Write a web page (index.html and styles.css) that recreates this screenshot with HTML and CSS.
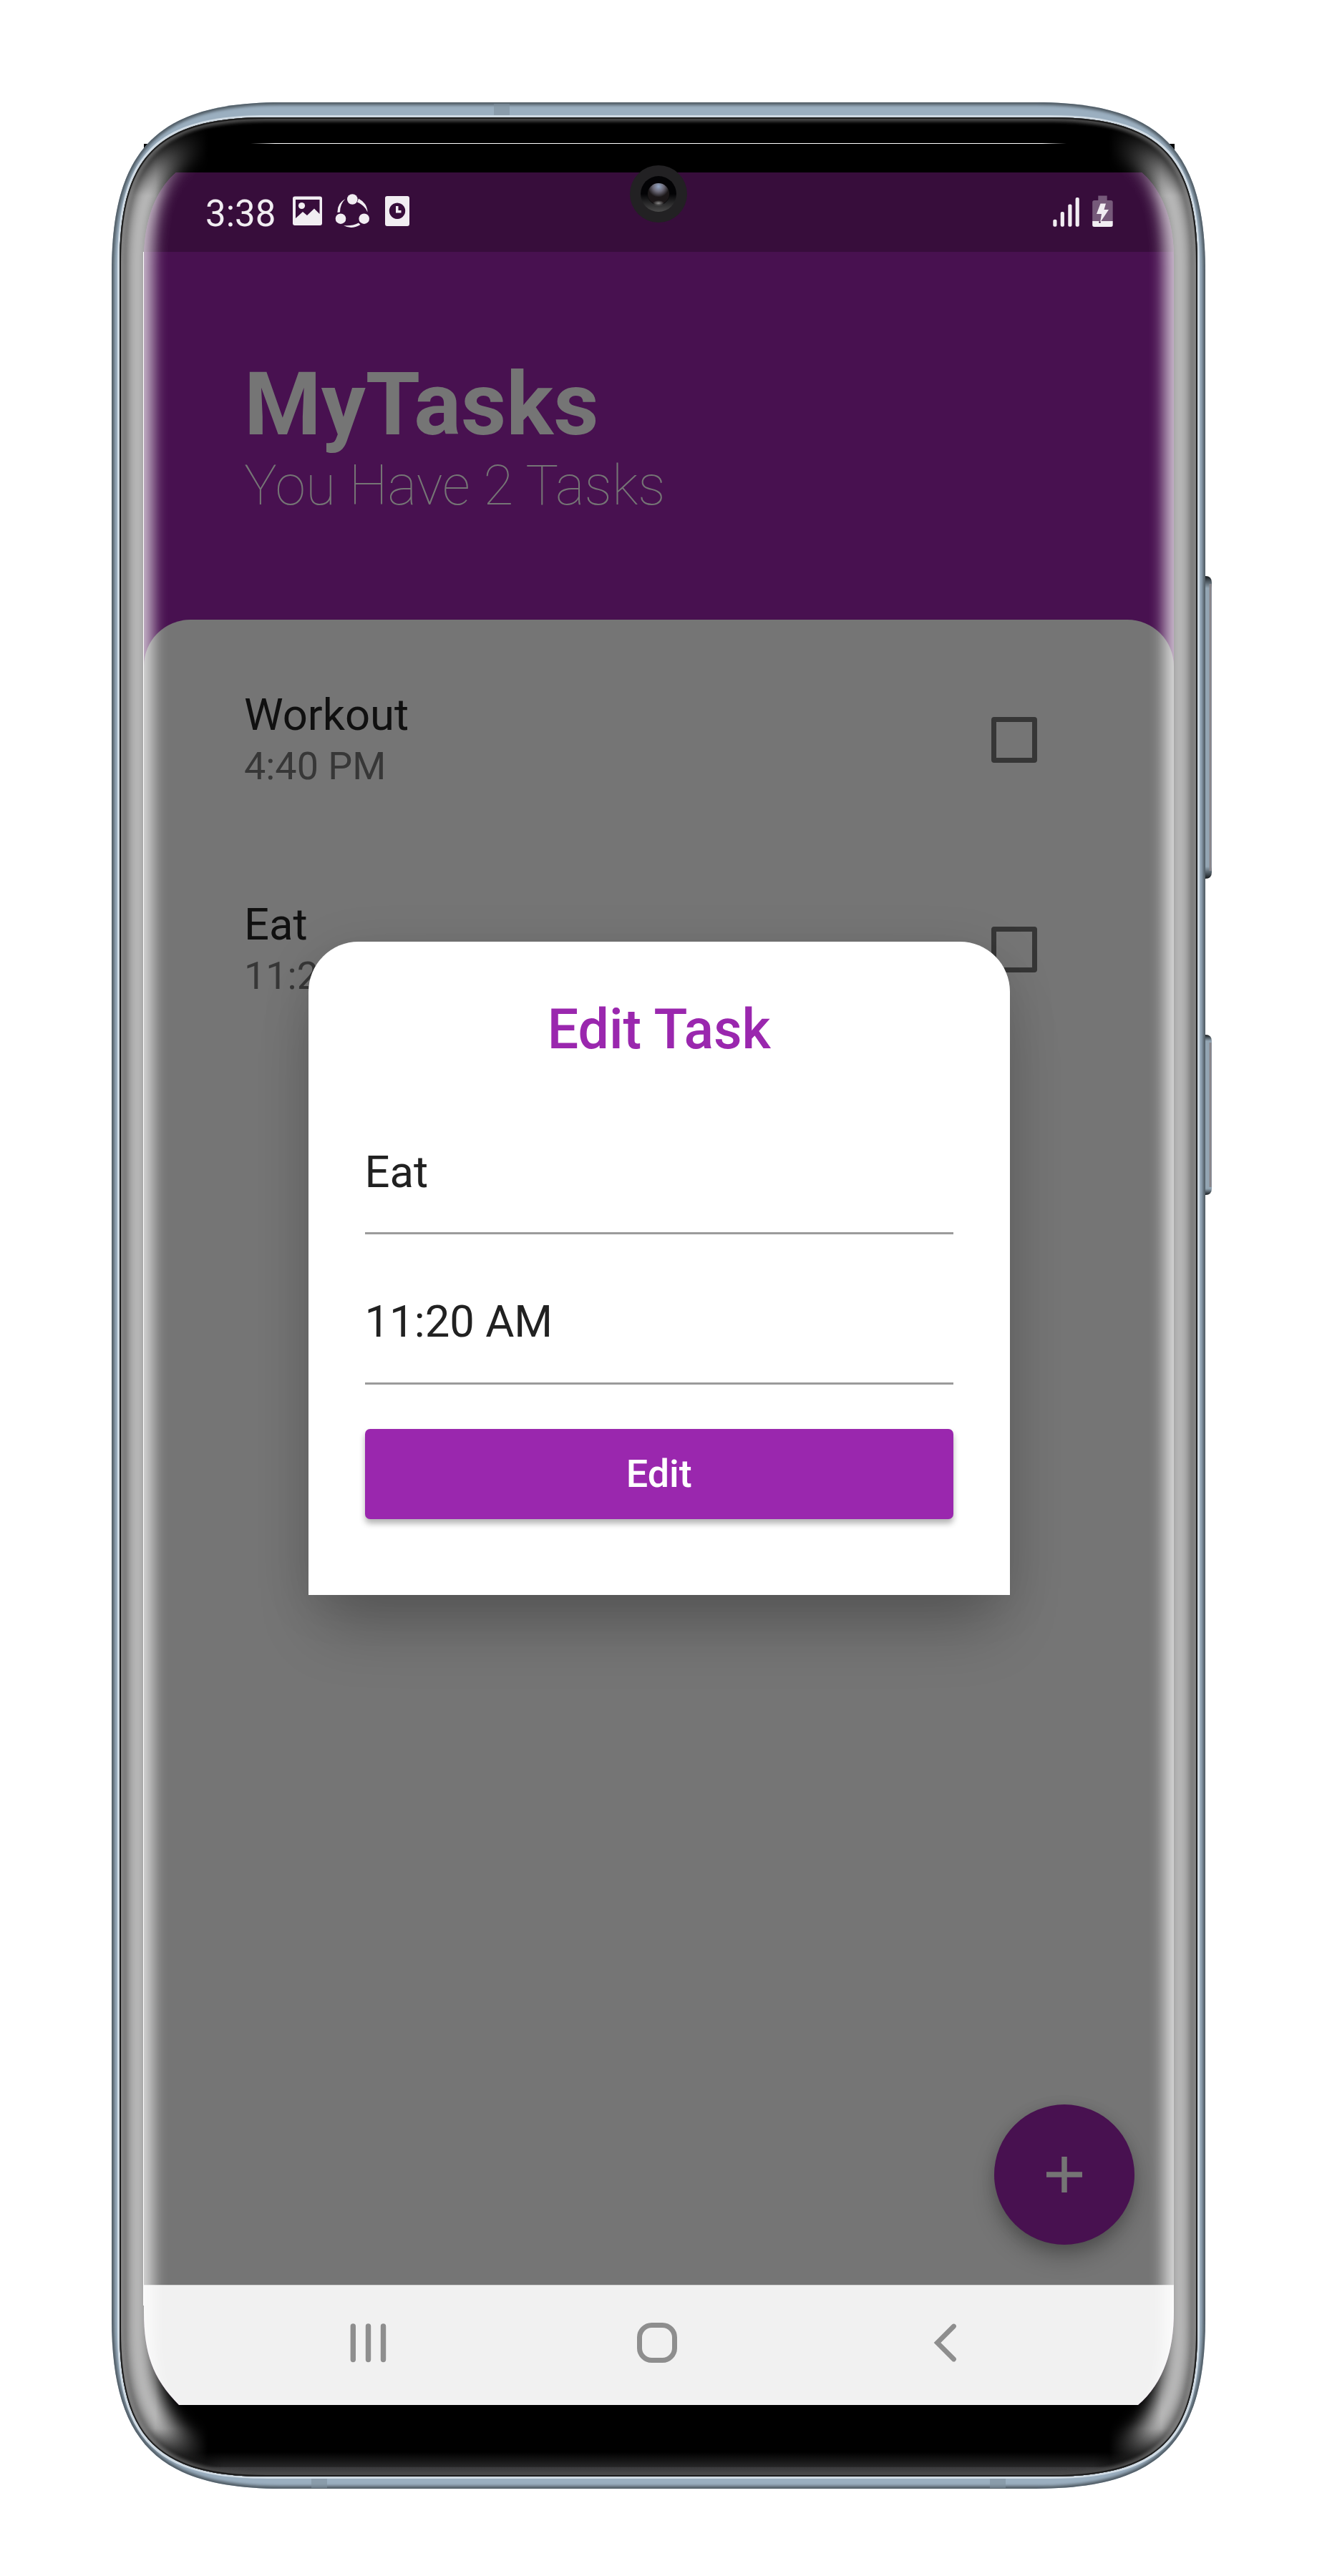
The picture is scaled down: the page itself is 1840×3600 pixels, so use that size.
FILE: index.html
```html
<!DOCTYPE html>
<html lang="en">
<head>
<meta charset="utf-8">
<title>MyTasks</title>
<link rel="stylesheet" href="styles.css">
</head>
<body>
<div class="stage">
  <svg class="frame" viewBox="0 0 1840 3600" aria-hidden="true">
    <defs>
      <path id="outer" d="M393 143H1447C1619 143 1684 208 1684 380V3241C1684 3413 1619 3478 1447 3478H393C221 3478 156 3413 156 3241V380C156 208 221 143 393 143Z"/>
      <path id="inner" d="M372 164H1468C1619 164 1673 218 1673 369V3256C1673 3407 1619 3461 1468 3461H372C221 3461 167 3407 167 3256V369C167 218 221 164 372 164Z"/>
      <path id="rim" d="M373 161H1467C1622 161 1676 215 1676 370V3257C1676 3410 1622 3464 1467 3464H373C218 3464 164 3410 164 3257V370C164 215 218 161 373 161Z"/>
      <clipPath id="clipOuter"><use href="#outer"/></clipPath>
      <clipPath id="clipInner"><use href="#inner"/></clipPath>
      <filter id="soft" filterUnits="userSpaceOnUse" x="100" y="100" width="1640" height="3400"><feGaussianBlur stdDeviation="2"/></filter>
      <linearGradient id="key" x1="0" y1="0" x2="0" y2="1">
        <stop offset="0" stop-color="#15191c"/><stop offset=".04" stop-color="#93a5b3"/>
        <stop offset=".96" stop-color="#93a5b3"/><stop offset="1" stop-color="#15191c"/>
      </linearGradient>
      <linearGradient id="chin" x1="0" y1="0" x2="0" y2="1">
        <stop offset="0" stop-color="#000"/><stop offset=".6" stop-color="#262627"/><stop offset=".62" stop-color="#3a3a3c"/><stop offset="1" stop-color="#464648"/>
      </linearGradient>
      <linearGradient id="chinFade" gradientUnits="userSpaceOnUse" x1="230" y1="0" x2="1610" y2="0"><stop offset="0" stop-color="#000"/><stop offset=".06" stop-color="#fff"/><stop offset=".94" stop-color="#fff"/><stop offset="1" stop-color="#000"/></linearGradient>
      <mask id="chinMask" maskUnits="userSpaceOnUse" x="0" y="3400" width="1840" height="100"><rect y="3400" width="1840" height="100" fill="url(#chinFade)"/></mask>
    </defs>
    <rect x="201" y="201" width="1440" height="20"/>
    <path d="M1680 805H1684Q1693 805 1693 814V1219Q1693 1228 1684 1228H1680Z" fill="url(#key)"/>
    <path d="M1680 1446H1684Q1693 1446 1693 1455V1661Q1693 1670 1684 1670H1680Z" fill="url(#key)"/>
    <path d="M1691 816V1217M1691 1457V1659" stroke="#8a868b" stroke-width="3"/>
    <use href="#outer" fill="#9bafc0"/>
    <g clip-path="url(#clipOuter)">
      <use href="#outer" fill="none" stroke="#4c565e" stroke-width="7" filter="url(#soft)"/>
      <path d="M690 145h22v16h-22zM435 3461h22v16h-22zM1383 3461h22v16h-22z" fill="#7f909d" opacity=".6"/>
    </g>
    <use href="#rim" fill="#cfdae3"/>
    <use href="#inner" fill="#000"/>
    <g clip-path="url(#clipInner)">
      <path d="M230 3427H1610V3461H230Z" fill="url(#chin)" mask="url(#chinMask)"/>
      <use href="#inner" fill="none" stroke="#484848" stroke-width="12" filter="url(#soft)"/>
      <use href="#inner" fill="none" stroke="#1c1c1c" stroke-width="4"/>
    </g>
  </svg>

  <main class="screen">
    <div class="status">
      <span class="clock">3:38</span>
      <svg class="notices" viewBox="409 270 166 50" aria-hidden="true">
        <g fill="#f1edf2">
          <path fill-rule="evenodd" d="M412 274.500H447Q450 274.500 450 277.500V312Q450 315 447 315H412Q409 315 409 312V277.500Q409 274.500 412 274.500ZM413 279V305L423 296L429 301L439 291.500L446.500 299V279Z"/>
          <circle cx="421.500" cy="287.500" r="4.600"/>
          <circle cx="492.300" cy="278.500" r="7.300"/><circle cx="476" cy="305.700" r="7.300"/><circle cx="508.700" cy="305.700" r="7.300"/>
          <path d="M482.500 278Q471 284 471.500 297L475 296.500Q475 285 482.500 278ZM501 277.500Q513 284 513.500 296.500Q509 286.500 499 282.500ZM480 315Q491 321.500 503.500 314L501 311.500Q491 316.500 480 315Z"/>
          <path fill-rule="evenodd" d="M541 274H569Q572 274 572 277V313Q572 316 569 316H541Q538 316 538 313V277Q538 274 541 274ZM555 283.500A11.200 11.200 0 1 0 555.010 283.500Z"/>
          <path d="M553 288H556.500V294H560.500V297.500H553Z"/>
        </g>
      </svg>
      <svg class="signals" viewBox="1471 272 84 46" aria-hidden="true">
        <g fill="#f1edf2">
          <rect x="1471.300" y="306.700" width="5.200" height="10" rx="2"/><rect x="1481.700" y="296" width="5.200" height="20.700" rx="2"/>
          <rect x="1492.300" y="285.500" width="5.200" height="31.200" rx="2"/><rect x="1502.600" y="276" width="5.200" height="40.700" rx="2"/>
        </g>
        <path d="M1534.300 273.500H1546.700V280H1552Q1554.700 280 1554.700 282.500V309H1526.200V282.500Q1526.200 280 1529 280H1534.300Z" fill="#765a7a"/>
        <path d="M1526.200 309H1554.700V314.500Q1554.700 317 1552 317H1529Q1526.200 317 1526.200 314.500Z" fill="#f1edf2"/>
        <path d="M1537.500 284.500H1545L1542.500 293H1549L1537 311L1539 299H1532Z" fill="#f1edf2"/>
        <circle cx="1536.500" cy="310.500" r="1.200" fill="#370d3b"/>
      </svg>
    </div>
    <header class="header">
      <h1 class="title">MyTasks</h1>
      <p class="subtitle">You Have 2 Tasks</p>
    </header>
    <section class="sheet">
      <ul class="tasks">
        <li class="task">
          <div><div class="name">Workout</div><div class="time">4:40 PM</div></div>
          <span class="box"></span>
        </li>
        <li class="task">
          <div><div class="name">Eat</div><div class="time">11:20 AM</div></div>
          <span class="box"></span>
        </li>
      </ul>
      <button class="fab" aria-label="Add task"><svg viewBox="0 0 50 50" aria-hidden="true"><path d="M25 0V50M0 25H50" stroke="#757575" stroke-width="7.500"/></svg></button>
    </section>
    <nav class="nav">
      <svg viewBox="485 3240 60 66" aria-hidden="true"><path d="M493.300 3250V3296.500M514.500 3250V3296.500M535.500 3250V3296.500" stroke-width="7.400"/></svg>
      <svg viewBox="887 3240 60 66" aria-hidden="true"><rect x="892.500" y="3248.500" width="49" height="49" rx="17" stroke-width="7"/></svg>
      <svg viewBox="1290 3240 60 66" aria-hidden="true"><path d="M1332.500 3250L1309.500 3273L1332.500 3296" stroke-width="6.800"/></svg>
    </nav>

    <form class="dialog">
      <h2 class="dialog-title">Edit Task</h2>
      <div class="field field-name">Eat</div>
      <div class="field field-time">11:20 AM</div>
      <button class="submit" type="button">Edit</button>
    </form>
  </main>

  <svg class="glass" viewBox="0 0 1840 3600" aria-hidden="true">
    <defs>
      <clipPath id="clipGlass"><path d="M372 166H1468C1619 166 1671 218 1671 369V3256C1671 3407 1619 3459 1468 3459H372C221 3459 169 3407 169 3256V369C169 218 221 166 372 166Z"/></clipPath>
      <filter id="glow" filterUnits="userSpaceOnUse" x="100" y="100" width="1640" height="3400"><feGaussianBlur stdDeviation="11"/></filter>
      <linearGradient id="fade" gradientUnits="userSpaceOnUse" x1="0" y1="165" x2="0" y2="3460">
        <stop offset="0" stop-color="#000"/><stop offset=".033" stop-color="#fff"/><stop offset=".98" stop-color="#fff"/><stop offset="1" stop-color="#000"/>
      </linearGradient>
      <linearGradient id="fadeSides" gradientUnits="userSpaceOnUse" x1="156" y1="0" x2="1684" y2="0">
        <stop offset=".04" stop-color="#fff"/><stop offset=".088" stop-color="#000"/><stop offset=".912" stop-color="#000"/><stop offset=".96" stop-color="#fff"/>
      </linearGradient>
      <mask id="ends" maskUnits="userSpaceOnUse" x="0" y="0" width="1840" height="3600"><rect width="1840" height="3600" fill="url(#fade)"/></mask>
      <mask id="sides" maskUnits="userSpaceOnUse" x="0" y="0" width="1840" height="3600"><rect width="1840" height="3600" fill="url(#fadeSides)"/></mask>
      <radialGradient id="lens" cx=".5" cy=".15" r=".5"><stop offset="0" stop-color="#93a6c4"/><stop offset=".5" stop-color="#6c6a78"/><stop offset="1" stop-color="#1b1718"/></radialGradient>
      <linearGradient id="bezel" x1="0" y1="0" x2="0" y2="1"><stop offset=".5" stop-color="#030305"/><stop offset="1" stop-color="#4a4a4a"/></linearGradient>
      <radialGradient id="glint"><stop offset="0" stop-color="#8a8a8a"/><stop offset="1" stop-color="#8a8a8a" stop-opacity="0"/></radialGradient>
      <linearGradient id="seam"><stop offset="0" stop-color="#fff" stop-opacity="0"/><stop offset=".03" stop-color="#fff"/><stop offset=".97" stop-color="#fff"/><stop offset="1" stop-color="#fff" stop-opacity="0"/></linearGradient>
    </defs>
    <g clip-path="url(#clipGlass)"><g mask="url(#ends)"><g mask="url(#sides)">
      <path d="M372 185C240 185 192 237 192 369V3256C192 3388 240 3440 372 3440M1468 185C1600 185 1648 237 1648 369V3256C1648 3388 1600 3440 1468 3440" fill="none" stroke="#fff" stroke-width="42" opacity=".74" filter="url(#glow)"/>
    </g></g></g>
    <rect x="200" y="352" width="1" height="2870" fill="#fff"/>
    <rect x="350" y="200" width="1140" height="1" fill="url(#seam)"/>
    <circle cx="920" cy="271" r="40" fill="#222123"/>
    <circle cx="920" cy="271" r="25" fill="url(#bezel)"/>
    <circle cx="920" cy="271" r="15.500" fill="#080809"/>
    <circle cx="920" cy="271" r="15" fill="url(#lens)"/>
    <ellipse cx="920" cy="284" rx="8" ry="4" fill="url(#glint)"/>
  </svg>
</div>
</body>
</html>
```
FILE: styles.css
```css
* { box-sizing: border-box; }
body { margin: 0; background: #fff; font-family: Roboto, sans-serif; }
.stage { position: relative; width: 1840px; height: 3600px; padding: 241px 200px 239px 201px; overflow: hidden; }
.frame, .glass { position: absolute; left: 0; top: 0; width: 1840px; height: 3600px; }
.glass { pointer-events: none; }

.screen {
  position: relative;
  display: flex;
  flex-direction: column;
  width: 1439px;
  height: 3120px;
  background: #481150;
  clip-path: path("M45 0H1394C1424 26 1439 70 1439 120V2990C1439 3045 1424 3090 1389 3120H49C14 3085 0 3050 0 2990V120C0 70 15 26 45 0Z");
}

.status { display: flex; align-items: center; height: 111px; padding: 0 85px 0 86px; background: #370d3b; }
.clock { width: 122px; margin-top: 4px; font-size: 51px; line-height: 60px; color: #f1edf2; }
.notices { width: 166px; height: 50px; margin-top: -3px; }
.signals { width: 84px; height: 46px; margin: -3px 0 0 auto; }

.header { height: 514px; padding: 142px 140px 0; color: #757575; }
.title { margin: 0; font-size: 123.2px; line-height: 143px; font-weight: 700; }
.subtitle { margin: 0; font-size: 77px; line-height: 84px; font-weight: 100; }

.sheet { position: relative; flex: 1; padding: 96px 191px 0 140px; background: #757575; border-radius: 65px 65px 0 0; }
.tasks { display: flex; flex-direction: column; gap: 151px; margin: 0; padding: 0; list-style: none; }
.task { display: flex; justify-content: space-between; align-items: flex-start; height: 142px; }
.name { font-size: 61.6px; line-height: 74px; color: #101010; }
.time { font-size: 53.9px; line-height: 69px; color: #373737; }
.box { width: 64px; height: 64px; margin-top: 40px; border: 7px solid #363636; border-radius: 4px; }

.fab {
  position: absolute; right: 55px; bottom: 56px;
  display: grid; place-items: center;
  width: 196px; height: 196px; padding: 0; border: 0; border-radius: 50%;
  background: #481150;
  box-shadow: 0 18px 34px -4px rgba(0,0,0,.3), 0 4px 20px rgba(0,0,0,.12);
}
.fab svg { width: 50px; height: 50px; }

.nav { display: flex; align-items: center; justify-content: space-between; height: 168px; padding: 0 290px 8px 284px; background: #f1f1f1; border-top: 1px solid #d2d2d2; }
.nav svg { width: 60px; height: 66px; fill: none; stroke: #8e8e8e; stroke-linecap: round; }

.dialog {
  position: absolute; left: 229.500px; top: 1075px;
  width: 980.500px; height: 912.500px; padding: 78px 79px 0;
  background: #fff; border-radius: 70px 70px 0 0;
  box-shadow: 0 60px 90px -20px rgba(0,0,0,.24), 0 10px 70px rgba(0,0,0,.1);
}
.dialog-title { margin: 0; text-align: center; font-size: 77px; line-height: 90px; font-weight: 500; color: #9a27ae; }
.field { border-bottom: 3px solid #9b9b9b; font-size: 61.6px; line-height: 74px; color: #212121; }
.field-name { padding: 117px 0 47px; }
.field-time { padding: 85px 0 48px; }
.submit {
  display: block; width: 100%; height: 126px; margin-top: 62px; padding: 0; border: 0; border-radius: 7px;
  background: #9a27ae; color: #fff; font: 500 53.9px/126px Roboto, sans-serif;
  box-shadow: 0 6px 8px rgba(0,0,0,.3);
}
```
